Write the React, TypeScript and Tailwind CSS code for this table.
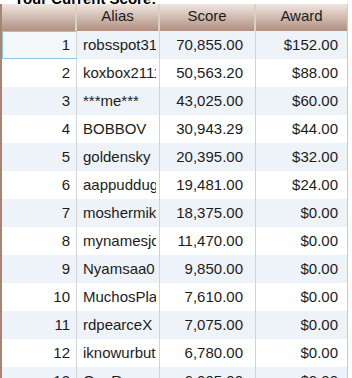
import React from "react";

const rows: [number, string, string, string][] = [
  [1, "robsspot3123", "70,855.00", "$152.00"],
  [2, "koxbox2111", "50,563.20", "$88.00"],
  [3, "***me***", "43,025.00", "$60.00"],
  [4, "BOBBOV", "30,943.29", "$44.00"],
  [5, "goldensky", "20,395.00", "$32.00"],
  [6, "aappuddugg", "19,481.00", "$24.00"],
  [7, "moshermike", "18,375.00", "$0.00"],
  [8, "mynamesjoe", "11,470.00", "$0.00"],
  [9, "Nyamsaa01", "9,850.00", "$0.00"],
  [10, "MuchosPlata", "7,610.00", "$0.00"],
  [11, "rdpearceX", "7,075.00", "$0.00"],
  [12, "iknowurbutt", "6,780.00", "$0.00"],
  [13, "GenRoss", "6,005.00", "$0.00"],
];

export default function App() {
  return (
    <div
      className="w-[352px] h-[378px] overflow-hidden bg-white text-[#1c1c1c]"
      style={{ fontFamily: '"Liberation Sans", Arial, sans-serif' }}
    >
      <div className="h-[14px] mt-[-10px] pl-[14px] text-[15px] leading-[17px] font-bold text-black whitespace-nowrap">
        Your Current Score:
      </div>
      <div className="w-[348px] border-l-2 border-l-[#a58675] border-r border-r-[#c9c9c9] text-[15px]">
        <div className="flex h-[27px] bg-gradient-to-b from-[#f0e7e1] to-[#b09080]">
          <div className="w-[75px] border-r-2 border-r-[#d9d0cb]" />
          <div className="w-[83px] border-r-2 border-r-[#d9d0cb] flex items-center justify-center pb-[2px]">Alias</div>
          <div className="w-[96px] border-r-2 border-r-[#d9d0cb] flex items-center justify-center pb-[2px]">Score</div>
          <div className="w-[91px] flex items-center justify-center pb-[2px]">Award</div>
        </div>
        {rows.map(([n, alias, score, award]) => (
          <div
            key={n}
            className={`flex h-[28px] leading-[28px] ${n % 2 === 1 ? "bg-[#eef2f9]" : "bg-white"}`}
          >
            <div
              className={`w-[75px] border-r border-r-[#d3d3d3] text-right pr-[6px] ${
                n === 1 ? "border border-[#86cbe0] bg-[#f4f8fb] leading-[26px]" : ""
              }`}
            >
              {n}
            </div>
            <div className="w-[83px] border-r border-r-[#d3d3d3] pl-[6px] pr-[3px]">
              <div className="overflow-hidden whitespace-nowrap">{alias}</div>
            </div>
            <div className="w-[96px] border-r border-r-[#d3d3d3] text-right pr-[12px] whitespace-nowrap">
              {score}
            </div>
            <div className="w-[91px] text-right pr-[9px] whitespace-nowrap">{award}</div>
          </div>
        ))}
      </div>
    </div>
  );
}
